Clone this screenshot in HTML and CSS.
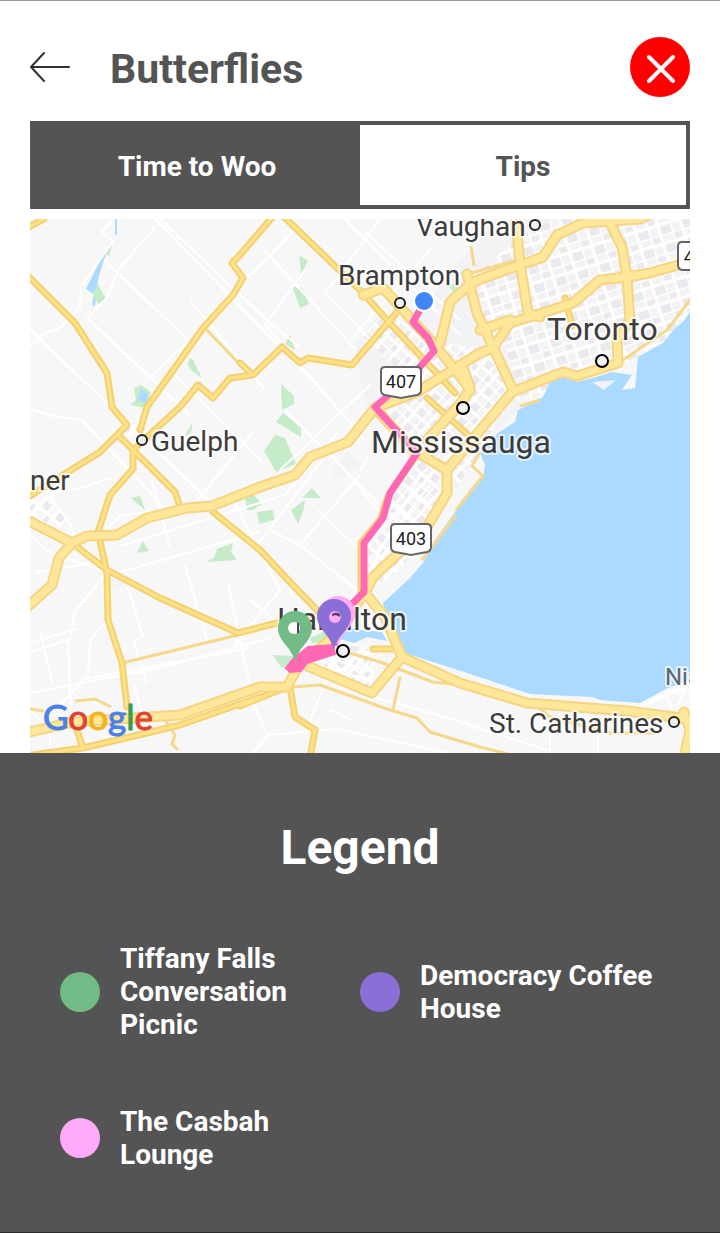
FILE: index.html
```html
<!DOCTYPE html>
<html lang="en">
<head>
<meta charset="utf-8">
<meta name="viewport" content="width=device-width, initial-scale=1">
<title>Butterflies</title>
<link rel="stylesheet" href="styles.css">
</head>
<body>
<div class="screen">
  <header class="header">
    <button class="back" aria-label="Back">
      <svg width="40" height="32" viewBox="0 0 40 32"><path d="M14 2 1 16l13 14M1 16h38"/></svg>
    </button>
    <h1 class="title">Butterflies</h1>
    <button class="close" aria-label="Close">
      <svg width="60" height="60" viewBox="0 0 60 60"><path d="m19 20 24 24M43 20 19 44"/></svg>
    </button>
  </header>

  <nav class="tabs">
    <button class="tab tab-active">Time to Woo</button>
    <button class="tab">Tips</button>
  </nav>

  <main class="map">
    <svg class="map-art" viewBox="30 219 660 534" role="img" aria-label="Route map">
      <defs>
        <pattern id="streets" width="23" height="19" patternUnits="userSpaceOnUse" patternTransform="rotate(-17)">
          <path class="block" d="M0 0h11v9H0zM11 9h12v10H11z"/>
          <path class="street" d="M0 0h23M0 9h23M0 0v19M11 0v19"/>
        </pattern>
        <pattern id="streets-west" width="20" height="18" patternUnits="userSpaceOnUse" patternTransform="rotate(-48)">
          <path class="block" d="M0 0h9v8H0zM10 9h9v8h-9z"/>
          <path class="street" d="M0 0h20M0 8h20M0 0v18M10 0v18"/>
        </pattern>
        <g id="highways">
          <path d="M25 609 52 585 59 558 72 543 87 536 117 535 147 518 187 508 212 506 260 487 295 475 310 457 348 442 375 408 417 392 480 353 493 348 510 323 530 317 573 303 600 280 627 277 650 273 695 260"/>
          <path d="M25 519 72 543"/>
          <path d="M440 343 450 302 470 284 483 278 543 257 557 235 583 223 640 219 650 214"/>
          <path d="M363 295 383 288 433 343 457 372 470 390 460 404 427 440"/>
          <path d="M610 214v9l12 24 5 30 3 43-13 20 1 23-41 13-14-4-51 20-15 18-50 60v23l-20 34-54 50-8 16 20 24 17 40 58 26 67 20 100 8 70 9"/>
          <path d="M375 408 413 450 447 470"/>
          <path d="M467 274 477 313 493 347 513 390M515 214 520 263 528 313 540 317M480 330 510 320M463 368 470 387"/>
          <path d="M25 733 73 722 180 715 260 687 287 687 300 663 372 693 402 657M300 663 330 640 365 593M684 712 690 730 684 758"/>
        </g>
        <g id="roads">
          <path d="M25 273 75 323 107 373 112 407 127 425 100 452 60 477 25 499"/>
          <path d="M275 214 240 255 232 263 243 278 233 295 203 328 147 407 140 430"/>
          <path d="M135 448 157 428 180 407 198 385 213 398 230 378 253 375 282 347 300 363 308 358 352 365 397 312M240 363 253 375"/>
          <path d="M281 214 362 292 387 320 455 393M427 398l50 45"/>
          <path d="M120 437 135 452 175 492 180 507M133 453v16l-23 26-12 37 9 41 1 47 14 43 5 44"/>
          <path d="M213 512 260 550 288 580 317 610M72 543 107 570 160 598 238 633 277 623 320 615"/>
          <path d="M260 697 180 725 130 737 83 748 77 730M25 756l58-8M240 706l47-19 3 0 5 30 20 13-5 28"/>
          <path d="M415 457 388 496 380 520 361 543V592"/>
          <path d="M565 298l7 28M373 649h20M25 229l19-10"/>
        </g>
        <path id="pin" d="M0 0C-5-16-17-20-17-33a17 17 0 0 1 34 0C17-20 5-16 0 0Z"/>
      </defs>

      <rect class="land" x="30" y="219" width="660" height="534"/>
      <path class="suburb" d="M500 219h190v92l-27 32-40 20-50 17-40 6-15 24-38 40-20 34-30 40-35 40-30-6 25-50 30-55-55-50-10-60 25-30 40 10 20-40z"/>
      <path fill="url(#streets)" d="M465 285 520 235 555 219H690v92l-27 32-35 18-55 21-55 20-12-55-35-30z"/>
      <path fill="url(#streets-west)" d="M362 335 387 312 430 340 490 350 515 395 480 450 440 515 400 570 370 590 365 545 392 495 417 455 380 405 398 370z"/>
      <path fill="url(#streets-west)" d="M315 665 340 643 382 652 368 687zM30 490l22 6 14 25-15 16-21-17zM120 422l28-5 8 24-21 7z"/>
      <path class="suburb" d="M332 470l16-18 16 14-28 12zM103 577l24 5-18 8z"/>
      <path class="water" d="M690 312 683 322 675 328 663 343 638 357 635 388 622 390 632 375 612 372 593 378 577 382 563 375 550 382 543 397 518 410 515 422 498 433 480 453 485 465 483 478 460 505 440 533 427 553 423 563 410 578 383 603 387 623 405 653 467 673 530 694 593 697 600 700 640 703 668 688 690 680z"/>
      <path class="suburb" d="m592 382 24-2-12 10z"/>
      <path class="water" d="m342 624 20 6 20 2 5 9-20-4-13 6-14-4zM115 219h2v16h-2zM112 242 104 260 98 279 95 306 92 305 94 294 86 289 99 263 107 250z"/>
      <path class="park" d="M113 242l-4 14-4-3zM98 284l8 15-8 5-5-10zM134 388l7-3 10 7-4 16-17-3 6-5zM189 358l4 2 9 18-10-7-4-6zM299 255l9 6-7 13zM292 286l10 2 7 16-9 4zM290 335l5 15-10-6zM281 384l13 12v8l-12 6zM283 413l18 15 0 9-25-15zM275 435l10 3 11 26-20 8-12-21zM245 498l9-3 8 9-9 6-6 0zM257 512l16-2 1 10-15 4zM302 498l10-10 9 10zM305 500l-2 12-5 12-7-14zM131 498l9-2 5 14zM143 541l6 10-12 2zM206 562l8-4 3-9 16-6-2 9 6 8zM193 422l-2 11-7 4zM273 655l20 1-3 14-9-3zM310 638l20-9-3 13-15 1zM448 285l10-1-4 9z"/>
      <path class="water" d="m141 389 7 5-1 10-9-4z"/>

      <g class="minor">
        <path d="M113 219l-11 13 11 10-32 44-1 22-20 20-17 6-22 21v31l-10 7M155 219 312 380M155 227 118 270l-11 28-17 17M104 260 190 342M86 317 190 415M30 330 130 425 250 540M45 342l-15-14M160 219l110 104 30 24M295 229l-23 25-32 30M264 250l92 100M265 390 190 300M190 340l-48 45M30 409l27 8 25 3 90 96M172 372l90 90M305 270l-40 55 100 115M380 219l-55 75 55 55M365 232 460 320M430 250 350 340M345 219 460 335"/>
        <path d="M180 508l-60 8-22 22M30 515l19-22 32-5 30-10M48 492l24 35 2 13M30 535l15 15 60 22M110 575l150-43M120 546 285 495 340 430M152 480l18 67M185 565l22 75M255 548l80-105M270 530 300 545 370 600M300 545l60-70M318 510 370 560M197 501l55-68M285 410l120 120M230 495l50 95-45 55M250 600l80 65M30 643l47-14M30 652l38-12 3 72M70 640l5-29 32-38M40 630l12 53M108 620l-18 20-2 35-28 30M30 693l130-25 110-30M80 680l170-32M128 587l15 50-9 5 13 42M228 585l22 100M134 687l16 50M35 573l55-10M30 710l20 20v23M250 697l18 38 70-6 110 24M268 735l-15 18M335 660l-30 73M330 710l22 10M360 693l120 34M458 722l93 29M550 735v18M598 718v35M640 707l40-20 10 4M650 703l32-14M665 690l7 20M678 705l10-24"/>
        <path d="M320 675l32-32M335 682l32-37M350 687l25-34M322 655l52 18M315 665l57 16M326 646l54 15M398 478l40 34M386 500l42 36M376 526l38 33M370 548l27 24M430 485l-55 70M420 475l-50 95M390 425l-30 45M370 385l-90 85M332 455l50 60"/>
      </g>

      <g class="local">
        <path d="M205 328 248 373M122 663 238 635M293 687 320 685 390 710 417 718 430 732 480 747 520 757M400 677 393 710M340 650 380 662 433 682 480 687M533 703 550 717 610 733 660 733M652 712v18M623 360 667 330 690 300M471 246l3 20M466 283l24 55M472 273l48-14M520 406l20-6M456 510 483 476 472 466 480 452M422 560l34-45M30 709l14 2M75 701l20-2 16 8M165 720l10 15-3 9 6 6"/>
      </g>

      <use href="#roads" class="road-edge"/>
      <use href="#roads" class="road-fill"/>
      <use href="#highways" class="highway-edge"/>
      <use href="#highways" class="highway-fill"/>

      <path class="route" d="M424 303 413 322 428 338 434 351 419 368 375 407 417 453 390 493 383 518 364 543V592L352 604 334 645"/>
      <path class="route-end" d="M333 645 308 647 293 659 286 668 290 672 301 671 307 663 335 654z"/>

      <g class="labels">
        <text class="city" x="416" y="236">Vaughan</text>
        <text class="city" x="338" y="285">Brampton</text>
        <text class="metro" x="547" y="340">Toronto</text>
        <text class="metro" x="371" y="453">Mississauga</text>
        <text class="city" x="151" y="451">Guelph</text>
        <text class="city" x="30" y="490">ner</text>
        <text class="metro" x="277" y="630">Hamilton</text>
        <text class="city" x="489" y="733">St. Catharines</text>
        <text class="town" x="665" y="685">Nia</text>
      </g>

      <g class="dots">
        <circle cx="535" cy="225" r="5"/><circle cx="400" cy="303" r="5"/><circle cx="142" cy="440" r="5"/><circle cx="674" cy="722" r="5"/>
        <circle class="dot-metro" cx="602" cy="361" r="6"/><circle class="dot-metro" cx="463" cy="408" r="6"/>
      </g>

      <g class="shields">
        <path d="M385 367h32q4 0 4 4v19q0 4-4 5l-16 3-16-3q-4-1-4-5v-19q0-4 4-4z"/>
        <path d="M395 524h32q4 0 4 4v19q0 4-4 5l-16 3-16-3q-4-1-4-5v-19q0-4 4-4z"/>
        <path d="M682 242h32v28h-32q-4-1-4-5v-19q0-4 4-4z"/>
        <text x="401" y="388">407</text><text x="411" y="545">403</text><text x="699" y="263">401</text>
      </g>

      <circle class="here" cx="424" cy="301" r="10"/>

      <use href="#pin" class="pin-pink" x="338" y="646"/>
      <use href="#pin" class="pin-green" x="295" y="661"/>
      <circle class="pin-hole" cx="294" cy="628" r="6"/>
      <path class="pin-detail" d="M297 623h2v10h-2z"/>
      <use href="#pin" class="pin-purple" x="334" y="649"/>
      <circle class="pin-pink" cx="335" cy="617" r="6"/>
      <path class="pin-detail" d="M332 614q4-3 8 0v3q-4-3-8-1z"/>
      <circle class="dot-hamilton" cx="343" cy="651" r="6"/>

      <text class="google" x="43" y="730"><tspan class="g-blue">G</tspan><tspan class="g-red">o</tspan><tspan class="g-yellow">o</tspan><tspan class="g-blue">g</tspan><tspan class="g-green">l</tspan><tspan class="g-red">e</tspan></text>
    </svg>
  </main>

  <section class="legend">
    <h2 class="legend-title">Legend</h2>
    <ul class="legend-list">
      <li class="legend-item"><span class="swatch swatch-green"></span><span>Tiffany Falls Conversation Picnic</span></li>
      <li class="legend-item"><span class="swatch swatch-purple"></span><span>Democracy Coffee House</span></li>
      <li class="legend-item"><span class="swatch swatch-pink"></span><span class="narrow">The Casbah Lounge</span></li>
    </ul>
  </section>
</div>
</body>
</html>
```
FILE: styles.css
```css
* { box-sizing: border-box; }

body {
  margin: 0;
  background: #fff;
  font-family: Roboto, "Liberation Sans", sans-serif;
  color: #545454;
}

button {
  padding: 0;
  border: 0;
  background: none;
  font: inherit;
  color: inherit;
}

.screen {
  display: flex;
  flex-direction: column;
  min-height: 100vh;
  border-top: 1px solid #999;
}

.header {
  display: flex;
  align-items: center;
  gap: 40px;
  padding: 36px 30px 24px;
}

.back { display: flex; }
.back svg { fill: none; stroke: #303030; stroke-width: 2; stroke-linecap: round; stroke-linejoin: round; }

.title {
  flex: 1;
  margin: 0;
  padding-top: 4px;
  font-size: 41px;
  line-height: 48px;
  font-weight: 700;
}

.close {
  display: flex;
  border-radius: 50%;
  background: #f00;
}
.close svg { fill: none; stroke: #fff; stroke-width: 4; stroke-linecap: round; }

.tabs {
  display: flex;
  height: 88px;
  margin: 0 30px 10px;
  border: 4px solid #545454;
}

.tab {
  flex: 1;
  font-size: 28px;
  line-height: 33px;
  font-weight: 700;
  padding-top: 2px;
}
.tab-active { background: #545454; color: #fff; }

.map { margin: 0 30px; }
.map-art { display: block; width: 100%; height: auto; }

.land { fill: #f7f7f7; }
.suburb { fill: #f3f2f4; }
.block { fill: #ebe9ed; }
.water { fill: #aadaff; }
.park { fill: #c5ebc8; }

.street { fill: none; stroke: #fff; stroke-width: 3; }
.minor { fill: none; stroke: #fff; stroke-width: 2; stroke-linejoin: round; }
.local { fill: none; stroke: #f5d88c; stroke-width: 3; stroke-linejoin: round; }

.road-edge, .road-fill, .highway-edge, .highway-fill {
  fill: none;
  stroke-linejoin: round;
  stroke-linecap: round;
}
.road-edge { stroke: #f3d070; stroke-width: 7; }
.road-fill { stroke: #fee28a; stroke-width: 3; }
.highway-edge { stroke: #f5d584; stroke-width: 11; }
.highway-fill { stroke: #ffe799; stroke-width: 7; }

.route { fill: none; stroke: #ff69b4; stroke-width: 7; stroke-linejoin: round; }
.route-end { fill: #ff69b4; stroke: #ff69b4; stroke-width: 2; stroke-linejoin: round; }

.labels {
  fill: #3c3c3c;
  stroke: #fff;
  stroke-opacity: .7;
  stroke-width: 4;
  stroke-linejoin: round;
  paint-order: stroke;
}
.city { font-size: 28px; }
.metro { font-size: 32px; }
.town { font-size: 24px; fill: #5c6670; }

.dots circle, .dot-hamilton { fill: #f2f2f2; stroke: #222; stroke-width: 2; }
.dots .dot-metro, .dot-hamilton { stroke: #000; }

.shields path { fill: #fff; stroke: #666; stroke-width: 2; }
.shields text { font-size: 18px; fill: #222; text-anchor: middle; }

.here { fill: #4285f4; stroke: #fff; stroke-width: 2; }

.pin-green { fill: #72bb86; }
.pin-purple { fill: #8a6fd6; }
.pin-pink { fill: #ffaafa; }
.pin-hole { fill: #fff; }
.pin-detail { fill: #54406a; }

.google {
  font-family: Lato, sans-serif;
  font-size: 35px;
}
.google tspan { stroke-width: 1; }
.g-blue { fill: #4a80e8; stroke: #4a80e8; }
.g-red { fill: #dc4437; stroke: #dc4437; }
.g-yellow { fill: #f0b51c; stroke: #f0b51c; }
.g-green { fill: #3a9c50; stroke: #3a9c50; }

.legend {
  flex: 1;
  padding: 67px 60px 60px;
  border-bottom: 1px solid #2b2b2b;
  background: #545454;
  color: #fff;
}

.legend-title {
  margin: 0 0 66px;
  font-size: 48px;
  line-height: 56px;
  font-weight: 700;
  text-align: center;
}

.legend-list {
  display: grid;
  grid-template-columns: 1fr 1fr;
  gap: 64px 0;
  margin: 0;
  padding: 0;
  list-style: none;
}

.legend-item {
  display: flex;
  align-items: center;
  gap: 20px;
  font-size: 28px;
  line-height: 33px;
  font-weight: 700;
}
.narrow { max-width: 160px; }

.swatch {
  flex: none;
  width: 40px;
  height: 40px;
  border-radius: 50%;
}
.swatch-green { background: #72bb86; }
.swatch-purple { background: #8a6fd6; }
.swatch-pink { background: #ffaafa; }
```
